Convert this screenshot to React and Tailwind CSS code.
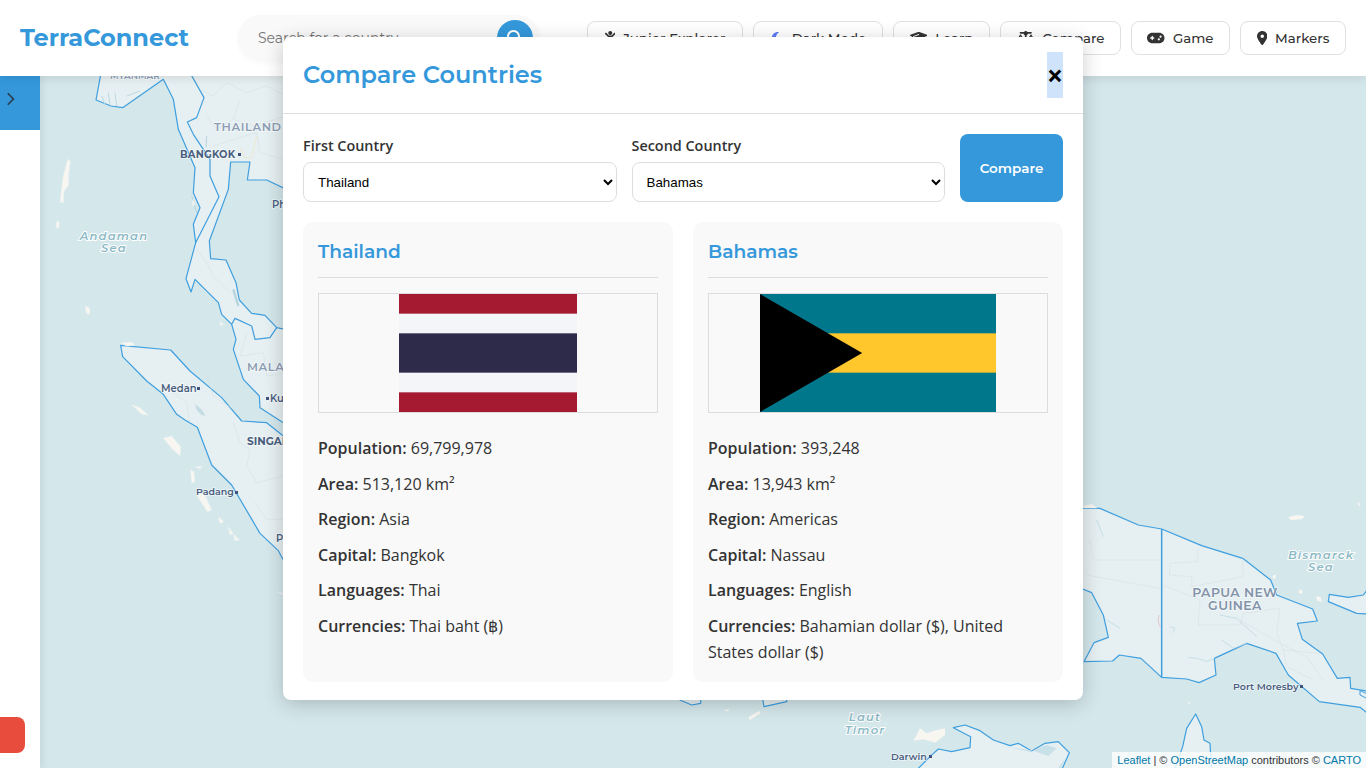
import React from "react";
import { FaChild } from "react-icons/fa";
import { FaMoon, FaGraduationCap, FaScaleBalanced, FaGamepad, FaLocationDot, FaMagnifyingGlass, FaChevronRight } from "react-icons/fa6";

const HEAD = "font-['Montserrat','Inter','Noto_Sans',sans-serif]";
const LAND = "#e6eff1";
const COAST = "#3f9fdf";

function Label({ x, y, children, size = 10, fill = "#4a5f80", weight = 600, anchor = "start", ls = 0 }) {
  return (
    <text x={x} y={y} fontSize={size} fill={fill} fontWeight={weight} textAnchor={anchor} letterSpacing={ls}
      fontFamily="Montserrat, Inter, sans-serif" stroke="#ffffff" strokeOpacity="0.6" strokeWidth="1.6" paintOrder="stroke">{children}</text>
  );
}

function Sea({ x, y, children }) {
  return (
    <text x={x} y={y} fontSize="11.5" fontStyle="italic" fontWeight="600" textAnchor="middle" letterSpacing="1.2"
      fontFamily="Montserrat, Inter, sans-serif" fill="#8dbac6" stroke="#ffffff" strokeWidth="2" paintOrder="stroke">{children}</text>
  );
}

function MapArt() {
  return (
    <svg className="absolute inset-0 h-full w-full" viewBox="40 76 1326 692" preserveAspectRatio="none">
      <rect x="40" y="76" width="1326" height="692" fill="#d4e7eb" />

      {/* left region, zoomed coordinates */}
      <g transform="translate(0 76) scale(0.33333)" strokeLinejoin="round">
        <path d="M305 -20 L288 72 L333 90 L368 95 L490 10 L520 70 L535 160 L585 275 L580 350 L600 395 L580 445 L587 500 L558 608 L573 648 L585 610 L655 680 L665 715 L695 745 L708 790 L700 820 L730 910 L778 960 L780 995 L850 1040 L880 1055 L880 765 L830 755 L795 718 L755 712 L718 672 L708 620 L678 552 L632 548 L628 495 L685 340 L692 258 L750 258 L742 312 L800 312 L880 350 L880 -20 Z" fill={LAND} stroke={COAST} strokeWidth="3.6" />
        <path d="M570 -10 L612 65 L590 125 L562 138 L580 175 L630 250 L630 300 L657 362 L587 500" fill="none" stroke={COAST} strokeWidth="3.6" />
        <path d="M695 745 L705 727 L755 750 L765 790 L810 785 L830 755" fill="none" stroke={COAST} strokeWidth="3.6" />
        <path d="M362 808 L512 822 L570 885 L665 965 L725 1035 L800 1040 L850 1080 L880 1100 L880 1470 L850 1452 L835 1424 L780 1372 L695 1227 L635 1167 L592 1054 L555 1032 L530 1015 L490 955 L440 915 L368 842 Z" fill={LAND} stroke={COAST} strokeWidth="3.6" />

        {/* faint borders */}
        <g fill="none" stroke="#d5dfe3" strokeWidth="1.6">
          <path d="M600 40 L640 60 L680 20 L740 50 L800 30 L860 60" />
          <path d="M620 120 L650 160 L700 130 L720 70 M700 130 L760 150 L860 120" />
          <path d="M640 210 L700 190 L770 170 L780 230 L850 250" />
          <path d="M590 520 L620 560 L640 600 L690 650" />
          <path d="M740 770 L720 840 L790 830 L800 900 L860 890" />
          <path d="M520 950 L560 980 L570 1040 M620 900 L640 960 L700 1000" />
          <path d="M700 1040 L720 1100 L750 1120 L740 1170 L770 1220 L850 1200 M765 1280 L800 1330 L850 1330" />
        </g>
        <path d="M305 60 L315 85 M325 50 L330 88 M345 50 L350 90 M380 60 L420 45" fill="none" stroke="#bcd9e2" strokeWidth="3" />
        <path d="M575 360 L590 410 M620 180 L618 215" fill="none" stroke="#b5d4de" strokeWidth="3" />
        <path d="M720 215 L735 245 L755 245 L770 180" fill="none" stroke="#eee5c4" strokeWidth="2" />
        <path d="M700 640 L715 690" fill="none" stroke="#b5d4de" strokeWidth="7" />
        <path d="M585 985 Q610 1000 615 1020 Q590 1015 585 985 Z" fill="#c4dde4" />

        {/* islands */}
        <g fill="#f8f6f1" stroke="#e9f1f2" strokeWidth="1.5">
          <path d="M203 250 L211 255 L206 295 L205 330 L192 345 L190 380 L180 378 L184 345 L190 300 Z" />
          <path d="M170 436 L178 438 L176 458 L168 455 Z" />
          <path d="M255 690 L268 695 L270 715 L260 712 Z" />
          <path d="M362 802 L395 798 L405 808 L380 810 Z" />
          <path d="M395 986 L420 995 L445 1018 L425 1014 Z" />
          <path d="M490 1087 L515 1080 L542 1112 L540 1140 L515 1117 Z" />
          <path d="M572 1182 L582 1187 L585 1217 L575 1222 Z" />
          <path d="M585 1172 L607 1172 L600 1178 Z" />
          <path d="M590 1257 L612 1252 L635 1302 L622 1307 Z" />
          <path d="M655 1322 L672 1337 L660 1342 Z M685 1352 L700 1372 L690 1377 Z M700 1374 L718 1392 L705 1394 Z" />
          <path d="M578 370 L585 385 L578 390 Z M660 735 L670 745 L662 750 Z" />
          <path d="M830 1547 L848 1552 L848 1556 Z" />
        </g>
      </g>

      {/* right region */}
      <g transform="translate(1080 480) scale(0.33333)" strokeLinejoin="round">
        <path d="M-40 85 L60 85 L175 135 L245 147 L365 197 L488 235 L572 300 L590 345 L698 387 L712 423 L652 430 L667 478 L728 522 L772 595 L810 592 L812 625 L870 635 L870 705 L840 682 L718 665 L625 585 L588 520 L500 490 L403 535 L408 585 L357 608 L320 597 L245 592 L183 535 L118 525 L98 543 L12 545 L42 488 L85 472 L70 405 L35 338 L8 327 L-40 327 Z" fill={LAND} stroke={COAST} strokeWidth="3.6" />
        <path d="M245 147 L245 592" fill="none" stroke={COAST} strokeWidth="4.5" />
        <path d="M870 318 L850 345 L805 352 L748 343 L745 365 L830 400 L870 402 Z" fill={LAND} stroke={COAST} strokeWidth="3.6" />
        <path d="M280 880 L308 800 L320 745 L347 702 L365 740 L372 780 L390 790 L395 880 Z" fill={LAND} stroke={COAST} strokeWidth="3.6" />
        <path d="M840 632 L870 645 L870 660 L840 645 Z" fill={LAND} stroke={COAST} strokeWidth="3" />
        <g fill="none" stroke="#d5dfe3" strokeWidth="1.6">
          <path d="M355 205 L352 245 L270 250 L268 285 L335 290 L335 320 L490 290 L488 235" />
          <path d="M250 315 L360 360 L355 435 L480 435 L490 400 L600 385 L590 460 L610 510 L720 520" />
          <path d="M30 180 L40 240 L240 240 M20 285 L100 300 L240 325" />
          <path d="M480 420 L600 490 L680 530 L730 600 M610 510 L620 560 L700 600" />
        </g>
        <g fill="none" stroke="#bfdbe5" strokeWidth="2.5">
          <path d="M325 532 Q360 535 380 545 L403 535 M425 480 L460 505 L500 490 M270 440 L285 445 L278 458 M420 405 L470 415 L530 470" />
          <path d="M80 420 L120 445 M50 120 L70 170" />
        </g>
        <path d="M238 405 Q230 425 242 442" fill="none" stroke="#e2c6cc" strokeWidth="3" />
        <g fill="#f8f6f1">
          <path d="M625 112 L650 105 L675 108 L665 118 L632 120 Z" />
          <path d="M830 66 L842 72 L838 78 Z" />
          <path d="M580 285 L588 285 L586 296 L578 295 Z" />
          <path d="M658 328 L668 332 L666 342 L656 338 Z" />
          <path d="M708 348 L722 352 L726 366 L712 362 Z" />
          <path d="M322 665 L332 668 L326 672 Z" />
          <path d="M10 78 L35 72 L52 85 L10 85 Z" />
        </g>
      </g>

      {/* bottom strip */}
      <g transform="translate(660 680) scale(0.33333)" strokeLinejoin="round">
        <path d="M60 60 L95 75 L122 70 L122 40 L60 40 Z" fill={LAND} stroke={COAST} strokeWidth="3.6" />
        <path d="M305 40 L312 80 L380 65 L380 40 Z" fill={LAND} stroke={COAST} strokeWidth="3.6" />
        <path d="M770 270 L810 230 L835 207 L875 215 L930 203 L932 170 L880 143 L915 135 L960 152 L1000 180 L1050 197 L1075 190 L1115 213 L1155 190 L1195 185 L1228 218 L1205 270 Z" fill={LAND} stroke={COAST} strokeWidth="3.6" />
        <path d="M1040 200 L1110 215 L1160 195 L1190 205 L1165 228 L1120 212 Z M1215 235 L1195 265 L1205 265 Z" fill="#c8e0e7" />
        <g fill="#f8f6f1">
          <path d="M780 145 L800 160 L830 150 L855 145 L855 165 L825 188 L790 178 L760 182 L770 165 Z" />
          <path d="M265 112 L298 92 L302 100 L270 120 Z" />
          <path d="M190 92 L207 86 L205 94 Z" />
        </g>
      </g>

      <Label x={214} y={131} size={11.5} fill="#8c9db3" weight={600} ls={0.6}>THAILAND</Label>
      <Label x={180} y={158} size={10} weight={700} ls={0.2}>BANGKOK</Label>
      <rect x={238} y={153} width={3} height={3} fill="#3f5478" />
      <Label x={272} y={208} size={10}>Ph</Label>
      <Label x={110} y={79} size={9} fill="#8c9db3">MYANMAR</Label>
      <Sea x={114} y={240}>Andaman</Sea>
      <Sea x={114} y={252}>Sea</Sea>
      <Label x={161} y={392} size={10}>Medan</Label>
      <rect x={197} y={387} width={3} height={3} fill="#3f5478" />
      <Label x={247} y={371} size={11.5} fill="#8c9db3" ls={0.6}>MALAYSIA</Label>
      <rect x={266} y={397} width={3} height={3} fill="#3f5478" />
      <Label x={270} y={402} size={10}>Kuala</Label>
      <Label x={247} y={445} size={10.5} weight={700}>SINGAPORE</Label>
      <Label x={196} y={495} size={9.5}>Padang</Label>
      <rect x={235} y={491} width={3} height={3} fill="#3f5478" />
      <Label x={276} y={542} size={10}>Pekanbaru</Label>
      <Sea x={1321} y={559}>Bismarck</Sea>
      <Sea x={1321} y={571}>Sea</Sea>
      <Label x={1235} y={597} size={12.5} fill="#8091a8" anchor="middle" ls={0.4}>PAPUA NEW</Label>
      <Label x={1235} y={610} size={12.5} fill="#8091a8" anchor="middle" ls={0.4}>GUINEA</Label>
      <Label x={1233} y={690} size={9.5}>Port Moresby</Label>
      <rect x={1300} y={685} width={3} height={3} fill="#3f5478" />
      <Sea x={865} y={721}>Laut</Sea>
      <Sea x={865} y={734}>Timor</Sea>
      <Label x={891} y={760} size={9.5}>Darwin</Label>
      <rect x={929} y={755} width={3} height={3} fill="#3f5478" />
    </svg>
  );
}

function NavButton({ icon, label, iconClass = "text-[#333333]", width }) {
  return (
    <button className={`flex h-[34px] items-center justify-center gap-[8px] rounded-lg border border-[#e0e0e0] bg-white text-[13.33px] font-medium text-[#333333] ${HEAD} ${width}`}>
      <span className={iconClass}>{icon}</span>
      <span className="pt-px">{label}</span>
    </button>
  );
}

function Row({ k, children }) {
  return (
    <p className="mb-[10px] text-base leading-[25.6px] text-[#333333] last:mb-0">
      <strong className="font-semibold">{k}:</strong> {children}
    </p>
  );
}

function ThaiFlag() {
  return (
    <svg width="178" height="118" viewBox="0 0 9 6" preserveAspectRatio="none">
      <rect width="9" height="6" fill="#A51931" />
      <rect y="1" width="9" height="4" fill="#F4F5F8" />
      <rect y="2" width="9" height="2" fill="#2D2A4A" />
    </svg>
  );
}

function BahamasFlag() {
  return (
    <svg width="236" height="118" viewBox="0 0 6 3" preserveAspectRatio="none">
      <rect width="6" height="3" fill="#00778B" />
      <rect y="1" width="6" height="1" fill="#FFC72C" />
      <path d="M0 0 L2.598 1.5 L0 3 Z" fill="#000000" />
    </svg>
  );
}

function Card({ name, flag, rows }) {
  return (
    <div className="rounded-[10px] bg-[#f9f9f9] p-[15px]">
      <h3 className={`border-b border-[#dddddd] pb-[10px] text-[18.6px] leading-[30px] font-semibold text-[#3498db] ${HEAD}`}>{name}</h3>
      <div className="mt-[15px] flex h-[120px] justify-center border border-[#dddddd]">{flag}</div>
      <div className="mt-[23px]">
        {rows.map(([k, v]) => <Row key={k} k={k}>{v}</Row>)}
      </div>
    </div>
  );
}

function CountrySelect({ value, options }) {
  return (
    <select defaultValue={value} className="h-10 w-full rounded-lg border border-[#dddddd] bg-white px-[10px] font-['Liberation_Sans',sans-serif] text-[13.33px] text-black">
      {options.map((o) => <option key={o}>{o}</option>)}
    </select>
  );
}

export default function App() {
  return (
    <div className="relative flex h-[768px] w-[1366px] flex-col overflow-hidden bg-white font-['Open_Sans',sans-serif]">
      <header className="relative z-10 flex h-[76px] shrink-0 items-center bg-white pr-5 pl-5 shadow-[0_2px_10px_rgba(0,0,0,0.1)]">
        <div className={`w-[218px] text-2xl font-bold text-[#3498db] ${HEAD}`}>TerraConnect</div>
        <div className="flex h-[46px] w-[302px] items-center justify-between rounded-full bg-[#f9f9f9] pr-[7px] pl-5 shadow-[0_2px_5px_rgba(0,0,0,0.03)]">
          <span className={`text-sm text-[#757575] ${HEAD}`}>Search for a country...</span>
          <span className="flex h-9 w-9 items-center justify-center rounded-full bg-[#3498db] text-base text-white"><FaMagnifyingGlass /></span>
        </div>
        <nav className="ml-auto flex gap-[10px]">
          <NavButton width="w-[156px]" icon={<FaChild className="h-[14px] w-[10.5px]" />} label="Junior Explorer" />
          <NavButton width="w-[130px]" icon={<FaMoon className="h-[14px] w-[14px]" />} iconClass="text-[#5b7cfa]" label="Dark Mode" />
          <NavButton width="w-[97px]" icon={<FaGraduationCap className="h-[14px] w-[17.5px]" />} label="Learn" />
          <NavButton width="w-[121px]" icon={<FaScaleBalanced className="h-[14px] w-[17.5px]" />} label="Compare" />
          <NavButton width="w-[99px]" icon={<FaGamepad className="h-[14px] w-[17.5px]" />} label="Game" />
          <NavButton width="w-[106px]" icon={<FaLocationDot className="h-[14px] w-[10.5px]" />} label="Markers" />
        </nav>
      </header>

      <div className="flex min-h-0 flex-1">
        <aside className="relative z-[5] w-10 shrink-0 bg-white shadow-[2px_0_8px_rgba(0,0,0,0.08)]">
          <button className="flex h-[54px] w-10 items-center bg-[#3498db] pb-2 pl-[3px] text-[#2c3e50]">
            <FaChevronRight className="text-[14px]" />
          </button>
          <div className="absolute bottom-[15px] left-0 h-9 w-[25px] rounded-r-lg bg-[#e74c3c]" />
        </aside>
        <main className="relative flex-1">
          <MapArt />
          <div className="absolute right-0 bottom-0 bg-white/80 px-[5px] font-['Liberation_Sans',sans-serif] text-[11px] leading-4 text-[#333333]">
            <span className="text-[#0078a8]">Leaflet</span> | © <span className="text-[#0078a8]">OpenStreetMap</span> contributors © <span className="text-[#0078a8]">CARTO</span>
          </div>
        </main>
      </div>

      <div className="absolute inset-x-0 top-[37px] z-20 mx-auto w-[800px] rounded-lg bg-white shadow-[0_4px_20px_rgba(0,0,0,0.2)]">
        <div className="flex h-[77px] items-center justify-between border-b border-[#dddddd] px-5">
          <h2 className={`text-2xl font-semibold text-[#3498db] ${HEAD}`}>Compare Countries</h2>
          <button className="flex h-[46px] w-4 items-center justify-center bg-[#cfe3fa] text-[28px] leading-none font-bold text-black">×</button>
        </div>
        <div className="px-5 pt-5 pb-[18px]">
          <div className="flex items-end gap-[15px]">
            <label className="block flex-1">
              <span className="mb-[5px] block text-[14.4px] leading-[23px] font-semibold text-[#333333]">First Country</span>
              <CountrySelect value="Thailand" options={["Thailand", "Bahamas"]} />
            </label>
            <label className="block flex-1">
              <span className="mb-[5px] block text-[14.4px] leading-[23px] font-semibold text-[#333333]">Second Country</span>
              <CountrySelect value="Bahamas" options={["Thailand", "Bahamas"]} />
            </label>
            <button className={`h-[68px] w-[103px] shrink-0 rounded-lg bg-[#3498db] text-[13.5px] font-semibold text-white ${HEAD}`}>Compare</button>
          </div>
          <div className="mt-5 grid h-[460px] grid-cols-2 gap-5">
            <Card name="Thailand" flag={<ThaiFlag />} rows={[
              ["Population", "69,799,978"], ["Area", "513,120 km²"], ["Region", "Asia"], ["Capital", "Bangkok"], ["Languages", "Thai"], ["Currencies", "Thai baht (฿)"],
            ]} />
            <Card name="Bahamas" flag={<BahamasFlag />} rows={[
              ["Population", "393,248"], ["Area", "13,943 km²"], ["Region", "Americas"], ["Capital", "Nassau"], ["Languages", "English"], ["Currencies", "Bahamian dollar ($), United States dollar ($)"],
            ]} />
          </div>
        </div>
      </div>
    </div>
  );
}
